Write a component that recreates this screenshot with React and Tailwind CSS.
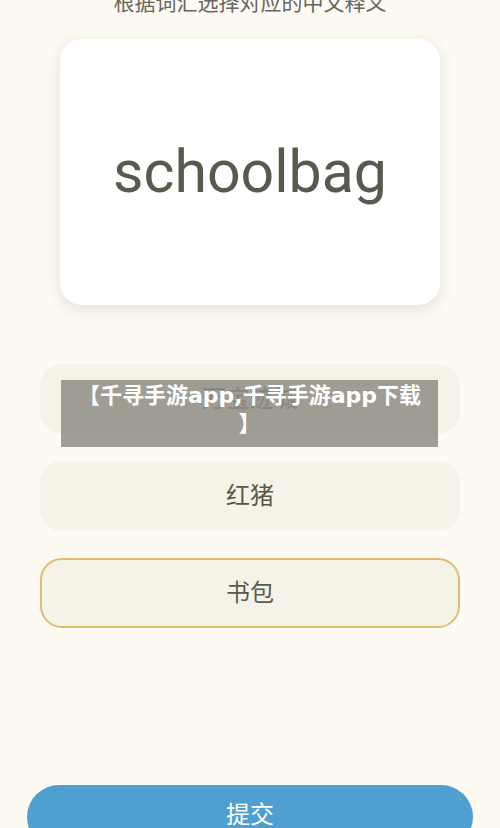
export default function App() {
  const font = { fontFamily: 'Roboto, "Noto Sans CJK SC", sans-serif' };
  return (
    <div className="relative h-[828px] w-[500px] overflow-hidden bg-[#fcfaf3]" style={font}>
      <div className="-mt-[9px] flex flex-col items-center">
        <div className="h-[24px] text-[21px] leading-[24px] text-[#66665c]">根据词汇选择对应的中文释义</div>
        <div className="mt-[24px] flex h-[266px] w-[380px] items-center justify-center rounded-[22px] bg-white shadow-[0_4px_16px_rgba(120,110,80,0.18)]">
          <span className="text-[59px] text-[#5a594d] leading-none -mt-[2px]">schoolbag</span>
        </div>
        <div className="mt-[59px] flex w-[420px] flex-col gap-[27px]">
          <div className="flex h-[70px] items-center justify-center rounded-[22px] bg-[#f5f3e8] text-[24px] text-[#5a594d]">万宝迹城</div>
          <div className="flex h-[70px] items-center justify-center rounded-[22px] bg-[#f5f3e8] text-[24px] text-[#5a594d]">红猪</div>
          <div className="flex h-[70px] items-center justify-center rounded-[22px] border-2 border-[#e0bc70] bg-[#f5f3e8] text-[24px] text-[#5a594d]">书包</div>
        </div>
        <div className="mt-[157px] flex h-[64px] w-[446px] items-start justify-center rounded-full bg-[#4f9fd1] pt-[12px] text-[24px] text-white">提交</div>
      </div>
      <div
        className="absolute left-[61px] top-[380px] h-[67px] w-[377px] bg-[#8f8c84]/85 px-[4px] pt-[2px] text-center text-[22px] font-bold leading-[28px] text-white"
        style={{ fontFamily: '"DejaVu Sans", "Noto Sans CJK SC", sans-serif' }}
      >
        【千寻手游app,千寻手游app下载
        <br />】
      </div>
    </div>
  );
}
